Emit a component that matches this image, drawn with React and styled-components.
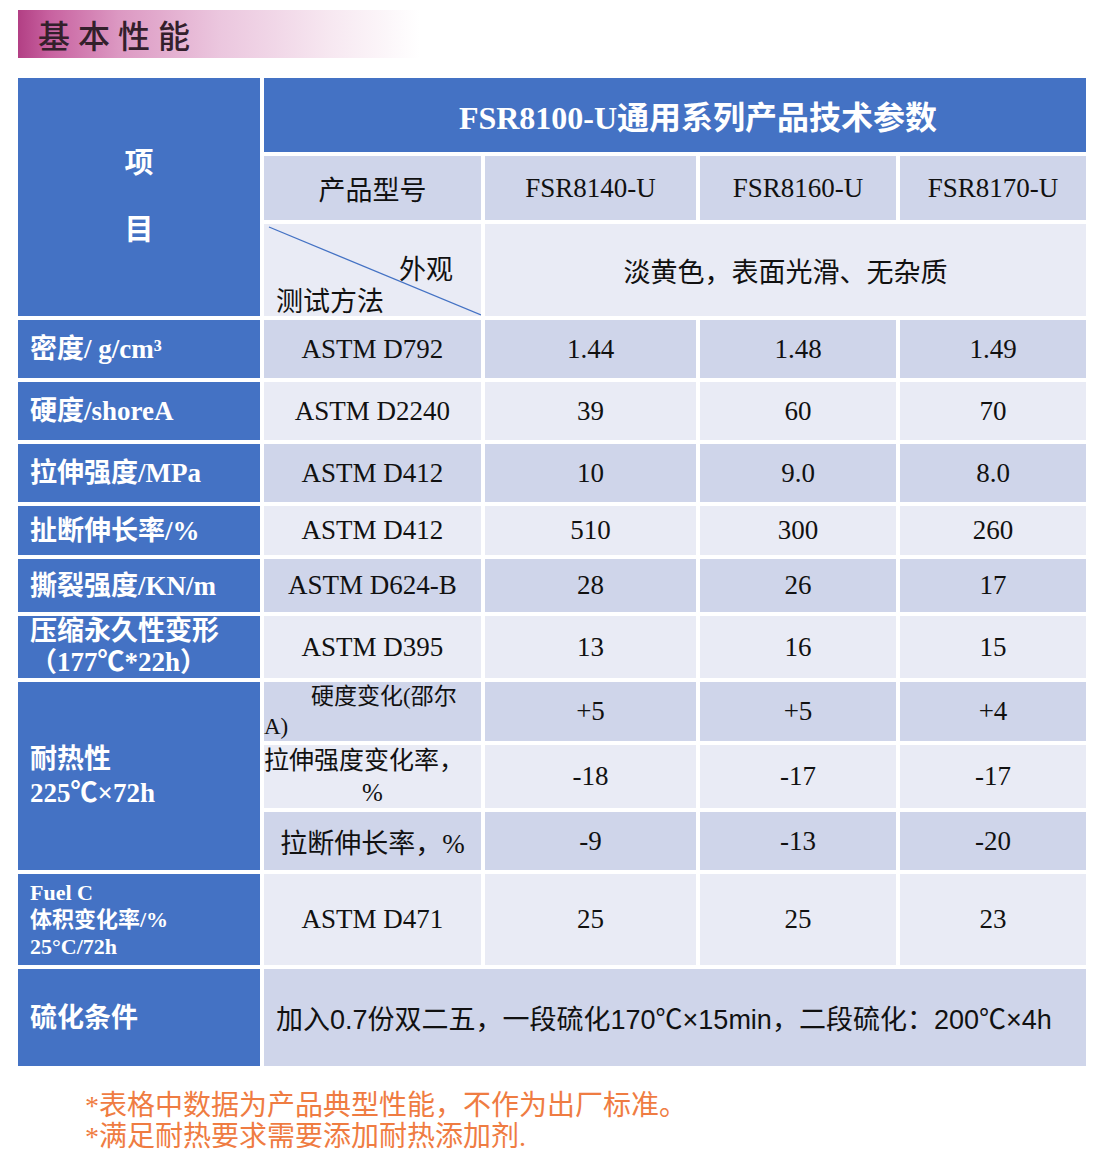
import React from 'react';
import styled, { createGlobalStyle } from 'styled-components';

const GlobalStyle = createGlobalStyle`
    body {
        margin: 0;
        background: #fff;
        font-family: "Liberation Serif", "Noto Sans CJK SC", serif;
    }
`;

const Page = styled.div`
    width: 1103px;
    padding: 10px 0 0 18px;
    box-sizing: border-box;
`;

const TitleBand = styled.div`
    width: 402px;
    height: 48px;
    display: flex;
    align-items: center;
    padding-left: 20px;
    box-sizing: border-box;
    background: linear-gradient(90deg, #b23f84 0%, #c862a0 8%, #dc98c2 25%, #ebc6de 50%, #f7e8f1 78%, #fff 100%);
    font-family: "Noto Sans CJK SC", sans-serif;
    font-size: 32px;
    font-weight: 500;
    letter-spacing: 8px;
    color: #33202b;
`;

const Table = styled.div`
    margin-top: 20px;
    display: grid;
    grid-template-columns: 242px 217px 211px 196px 186px;
    grid-template-rows: 74px 64px 92px 58px 58px 58px 49px 53px 62px 59px 63px 58px 91px 97px;
    gap: 4px;
`;

const place = (p) => `
    grid-column: ${p.$c} / span ${p.$cs || 1};
    grid-row: ${p.$r} / span ${p.$rs || 1};
`;

const CornerCell = styled.div`
    ${place}
    background: #4472c4;
    color: #fff;
    display: flex;
    flex-direction: column;
    align-items: center;
    padding-top: 70px;
    gap: 37px;
    font-size: 29px;
    font-weight: 700;
    line-height: 30px;
`;

const TitleCell = styled.div`
    ${place}
    background: #4472c4;
    color: #fff;
    display: flex;
    align-items: center;
    justify-content: center;
    padding-left: 46px;
    font-size: 32px;
    font-weight: 700;
`;

const LabelCell = styled.div`
    ${place}
    background: #4472c4;
    color: #fff;
    display: flex;
    flex-direction: column;
    justify-content: center;
    padding-left: 12px;
    font-size: ${(p) => p.$size || 27}px;
    line-height: ${(p) => p.$lh || 32}px;
    font-weight: 700;
    white-space: nowrap;
`;

const DataCell = styled.div`
    ${place}
    background: ${(p) => (p.$light ? '#e9ebf5' : '#cfd5ea')};
    color: #111;
    display: flex;
    align-items: center;
    justify-content: center;
    font-size: 27px;
`;

const DiagonalCell = styled.div`
    ${place}
    position: relative;
    background: #e9ebf5;
    color: #111;
    font-size: 27px;
    line-height: 32px;
    display: flex;
    flex-direction: column;
    padding-top: 30px;
`;

const DiagonalLine = styled.svg`
    position: absolute;
    inset: 0;
    width: 100%;
    height: 100%;
`;

const UpperWord = styled.span`
    align-self: flex-end;
    margin-right: 28px;
`;

const LowerWord = styled.span`
    padding-left: 12px;
`;

const WrapCell = styled.div`
    ${place}
    background: ${(p) => (p.$light ? '#e9ebf5' : '#cfd5ea')};
    color: #111;
    display: flex;
    flex-direction: column;
    justify-content: center;
    font-size: ${(p) => p.$size || 27}px;
    line-height: ${(p) => p.$lh || 32}px;
`;

const Line = styled.span`
    padding-left: ${(p) => p.$indent || 0}px;
    text-align: ${(p) => p.$align || 'left'};
    white-space: nowrap;
`;

const CureCell = styled.div`
    ${place}
    background: #cfd5ea;
    color: #111;
    display: flex;
    align-items: center;
    padding-left: 12px;
    font-family: "Liberation Sans", "Noto Sans CJK SC", sans-serif;
    font-size: 27px;
    white-space: nowrap;
`;

const Notes = styled.div`
    padding: 24px 0 0 67px;
    color: #ef7c42;
    font-size: 28px;
    line-height: 31px;
`;

const rows = [
    { label: '密度/ g/cm³', method: 'ASTM D792', v: ['1.44', '1.48', '1.49'] },
    { label: '硬度/shoreA', method: 'ASTM D2240', v: ['39', '60', '70'] },
    { label: '拉伸强度/MPa', method: 'ASTM D412', v: ['10', '9.0', '8.0'] },
    { label: '扯断伸长率/%', method: 'ASTM D412', v: ['510', '300', '260'] },
    { label: '撕裂强度/KN/m', method: 'ASTM D624-B', v: ['28', '26', '17'] },
];

const App = () => {
    return (
        <Page>
            <GlobalStyle />
            <TitleBand>基本性能</TitleBand>
            <Table>
                <CornerCell $r={1} $c={1} $rs={3}>
                    <span>项</span>
                    <span>目</span>
                </CornerCell>
                <TitleCell $r={1} $c={2} $cs={4}>FSR8100-U通用系列产品技术参数</TitleCell>

                <DataCell $r={2} $c={2}>产品型号</DataCell>
                <DataCell $r={2} $c={3}>FSR8140-U</DataCell>
                <DataCell $r={2} $c={4}>FSR8160-U</DataCell>
                <DataCell $r={2} $c={5}>FSR8170-U</DataCell>

                <DiagonalCell $r={3} $c={2}>
                    <DiagonalLine viewBox="0 0 217 92" preserveAspectRatio="none">
                        <line x1="5" y1="3" x2="217" y2="91" stroke="#4472c4" strokeWidth="1.3" />
                    </DiagonalLine>
                    <UpperWord>外观</UpperWord>
                    <LowerWord>测试方法</LowerWord>
                </DiagonalCell>
                <DataCell $r={3} $c={3} $cs={3} $light>淡黄色，表面光滑、无杂质</DataCell>

                {rows.map((row, i) => {
                    const r = 4 + i;
                    const light = i % 2 === 1;
                    return (
                        <React.Fragment key={row.label}>
                            <LabelCell $r={r} $c={1}>{row.label}</LabelCell>
                            <DataCell $r={r} $c={2} $light={light}>{row.method}</DataCell>
                            {row.v.map((v, j) => (
                                <DataCell key={j} $r={r} $c={3 + j} $light={light}>{v}</DataCell>
                            ))}
                        </React.Fragment>
                    );
                })}

                <LabelCell $r={9} $c={1} $lh={31}>
                    <span>压缩永久性变形</span>
                    <span>（177℃*22h）</span>
                </LabelCell>
                <DataCell $r={9} $c={2} $light>ASTM D395</DataCell>
                <DataCell $r={9} $c={3} $light>13</DataCell>
                <DataCell $r={9} $c={4} $light>16</DataCell>
                <DataCell $r={9} $c={5} $light>15</DataCell>

                <LabelCell $r={10} $c={1} $rs={3} $lh={34}>
                    <span>耐热性</span>
                    <span>225℃×72h</span>
                </LabelCell>
                <WrapCell $r={10} $c={2} $size={23} $lh={30}>
                    <Line $indent={47}>硬度变化(邵尔</Line>
                    <Line>A)</Line>
                </WrapCell>
                <DataCell $r={10} $c={3}>+5</DataCell>
                <DataCell $r={10} $c={4}>+5</DataCell>
                <DataCell $r={10} $c={5}>+4</DataCell>

                <WrapCell $r={11} $c={2} $light $size={25}>
                    <Line>拉伸强度变化率，</Line>
                    <Line $align="center">%</Line>
                </WrapCell>
                <DataCell $r={11} $c={3} $light>-18</DataCell>
                <DataCell $r={11} $c={4} $light>-17</DataCell>
                <DataCell $r={11} $c={5} $light>-17</DataCell>

                <DataCell $r={12} $c={2}>拉断伸长率，%</DataCell>
                <DataCell $r={12} $c={3}>-9</DataCell>
                <DataCell $r={12} $c={4}>-13</DataCell>
                <DataCell $r={12} $c={5}>-20</DataCell>

                <LabelCell $r={13} $c={1} $size={22} $lh={27}>
                    <span>Fuel C</span>
                    <span>体积变化率/%</span>
                    <span>25°C/72h</span>
                </LabelCell>
                <DataCell $r={13} $c={2} $light>ASTM D471</DataCell>
                <DataCell $r={13} $c={3} $light>25</DataCell>
                <DataCell $r={13} $c={4} $light>25</DataCell>
                <DataCell $r={13} $c={5} $light>23</DataCell>

                <LabelCell $r={14} $c={1}>硫化条件</LabelCell>
                <CureCell $r={14} $c={2} $cs={4}>加入0.7份双二五，一段硫化170℃×15min，二段硫化：200℃×4h</CureCell>
            </Table>
            <Notes>
                <div>*表格中数据为产品典型性能，不作为出厂标准。</div>
                <div>*满足耐热要求需要添加耐热添加剂.</div>
            </Notes>
        </Page>
    );
};

export default App;
